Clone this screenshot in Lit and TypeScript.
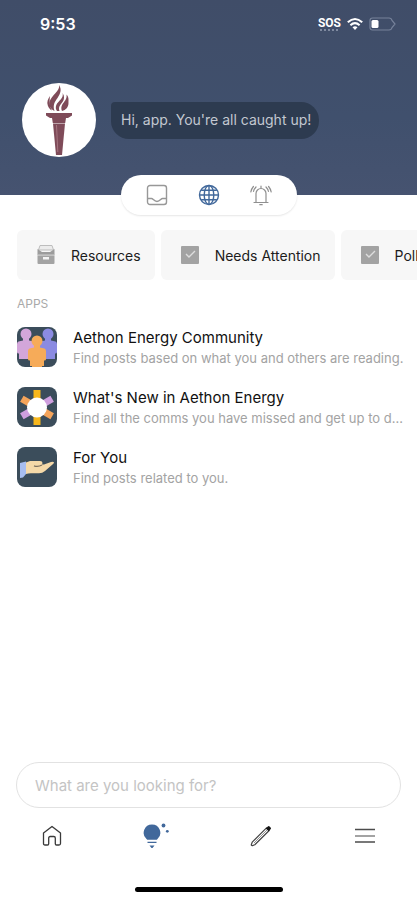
import { LitElement, html, css, svg, TemplateResult } from "lit";
import { customElement, state } from "lit/decorators.js";
import { classMap } from "lit/directives/class-map.js";

interface Shortcut {
  label: string;
  icon: TemplateResult;
}

interface AppEntry {
  title: string;
  text: string;
  icon: TemplateResult;
}

interface Action {
  id: string;
  label: string;
  icon: TemplateResult;
}

const drawerIcon = html`<svg width="18" height="20" viewBox="0 0 18 20" aria-hidden="true">
  <path d="M3 .5h12l1.500 4.500H1.500z" fill="#ececec" stroke="#bdbdbd" stroke-width="1" />
  <path d="M.5 4l4.500 3h8l4.500-3v6H.5z" fill="#9c9c9c" />
  <rect x=".5" y="10" width="17" height="9" rx="1" fill="#a3a3a3" />
  <rect x=".5" y="9.500" width="17" height="1.200" fill="#cfcfcf" />
  <path d="M6 12h6v2.500H6z" fill="#f4f4f4" />
</svg>`;

const checkIcon = html`<svg width="18" height="20" viewBox="0 0 18 20" aria-hidden="true">
  <rect x="0" y="1" width="18" height="18" rx="1" fill="#a3a3a3" />
  <path d="M5 9l3 3 6-6" fill="none" stroke="#dedede" stroke-width="1.400" />
</svg>`;

const person = (x: number, y: number, fill: string) => svg`
  <g transform="translate(${x} ${y})" fill=${fill}>
    <circle cx="9" cy="6" r="5.500" />
    <path d="M6 10h6v2.500l4.500 1q1.500.5 1.500 2.500v8q0 1.500-1.500 1.500H16V31H2v-5.500h-.5Q0 25.500 0 24v-8q0-2 1.500-2.500l4.500-1z" />
  </g>`;

const peopleIcon = html`<svg class="tile" viewBox="0 0 40 40" aria-hidden="true">
  <rect width="40" height="40" rx="8" fill="#3b4d5b" />
  ${person(0, 1, "#d3a6da")} ${person(22, 1, "#8b8be2")} ${person(11, 8, "#f6ab59")}
  <path d="M15 38h10v2H15z" fill="#f6ab59" />
</svg>`;

const sunIcon = html`<svg class="tile" viewBox="0 0 40 40" aria-hidden="true">
  <rect width="40" height="40" rx="8" fill="#3b4d5b" />
  <rect x="16.500" y="3" width="7" height="35" fill="#f7b71c" />
  <rect x="16.500" y="3" width="7" height="35" fill="#f5a45a" transform="rotate(-60 20 20.500)" />
  <rect x="16.500" y="3" width="7" height="35" fill="#cf9fdf" transform="rotate(60 20 20.500)" />
  <circle cx="20" cy="20.500" r="10" fill="#ffffff" />
</svg>`;

const handIcon = html`<svg class="tile" viewBox="0 0 40 40" aria-hidden="true">
  <rect width="40" height="40" rx="8" fill="#3b4d5b" />
  <path d="M3 16l6-1.500V27l-3 3.500-3 .5z" fill="#a7bdf0" />
  <path
    d="M9 15.500l4-1.500h10q2.500 0 2.500 2l-.5 1.500h2l7-2.500q2.500-.5 3 .3.300 1-1.500 2.200L28 24q-2.500 2.200-6 2.200h-8q-3 0-5 .8z"
    fill="#f5d9a8"
  />
  <path d="M17 18.800q4 1.500 8-.8" fill="none" stroke="#7d715f" stroke-width="1.300" />
</svg>`;

const torchIcon = html`<svg class="torch" viewBox="0 0 28 70" aria-hidden="true">
  <g fill="#7f4b59">
    <path d="M14 0c1.500 6-8 10.500-9.500 17-.8 4 1.500 7.500 5 9C7.500 20 10 16.500 12.500 13 15.500 8.500 17 4.500 14 0z" />
    <path d="M17.500 8c1.800 5-4.500 8-6.200 12-1 2.500-.4 4.500.7 6h2.500c-1.500-4 1-6.500 3-9 2-2.700 2.200-6 0-9z" />
    <path d="M21.500 9.500c.8 5-2.500 7-4.200 10-1.200 2.300-1.300 4.500-.3 6.500 4-1 6.500-4 6.500-8 0-3 .5-6-2-8.500z" />
    <path d="M5 11c-2 3-3.500 6-2.200 9.500.9 2.500 2.200 4 4.200 5C4 20.500 4.500 15 5 11z" />
    <path d="M1 28h26v2.500l-4 2.500H5l-4-2.500z" />
    <path d="M7 33h14l-.8 5H7.800z" />
    <path d="M8 38.500h12L17 70h-6z" />
  </g>
  <path d="M11.500 40l1.300 27" stroke="#a5747f" stroke-width="1" />
</svg>`;

const inboxIcon = html`<svg width="22" height="22" viewBox="0 0 22 22" aria-hidden="true">
  <g fill="none" stroke="#989898" stroke-width="1.400" stroke-linejoin="round">
    <rect x="1.500" y="1.500" width="19" height="19" rx="2.500" />
    <path d="M1.500 14.500h4c1.500 0 2.500 3 5.500 3s4-3 5.500-3h4" />
  </g>
</svg>`;

const globeIcon = html`<svg width="22" height="22" viewBox="0 0 22 22" aria-hidden="true">
  <g fill="none" stroke="#41689b" stroke-width="1.400">
    <circle cx="11" cy="11" r="9.500" />
    <ellipse cx="11" cy="11" rx="4.800" ry="9.500" />
    <path d="M11 1.500v19M1.500 11h19M3.200 6.200h15.600M3.200 15.800h15.600" />
  </g>
</svg>`;

const bellIcon = html`<svg width="22" height="22" viewBox="0 0 22 22" aria-hidden="true">
  <g fill="none" stroke="#8f8f8f" stroke-width="1.200" stroke-linecap="round" stroke-linejoin="round">
    <path d="M4 18.500h14M6 18V9.500a5 5 0 0 1 10 0V18M11 4.500V2M9.800 20.700h2.400" />
    <path d="M3.400 2.500Q1.300 5 .8 8M6 3Q4 5 3.500 7.500M18.600 2.500q2.100 2.500 2.600 5.500M16 3q2 2 2.500 4.500" />
  </g>
</svg>`;

const homeIcon = html`<svg width="20" height="22" viewBox="0 0 20 22" aria-hidden="true">
  <path
    d="M1.500 8L10 1.500 18.500 8v10.500q0 1.500-1.500 1.500h-2.500q-1.200 0-1.200-1.200V13q0-1.500-1.500-1.500H8.200q-1.500 0-1.500 1.500v5.800q0 1.200-1.200 1.200H3q-1.500 0-1.500-1.500z"
    fill="none"
    stroke="#3a3a3a"
    stroke-width="1.300"
    stroke-linejoin="round"
  />
</svg>`;

const bulbIcon = html`<svg width="26" height="26" viewBox="0 0 26 26" aria-hidden="true">
  <g fill="#41689b">
    <path d="M9 1.500a8.300 8.300 0 0 1 5.500 14.500l-.7.800H4.200L3.500 16A8.300 8.300 0 0 1 9 1.500z" />
    <path d="M4.500 18.700h9v1.400h-9zM6.500 22.500h5L9.500 25h-1z" />
    <circle cx="20.500" cy="2.500" r="1.900" />
    <circle cx="24.300" cy="8.300" r="1.400" />
  </g>
</svg>`;

const pencilIcon = html`<svg width="22" height="22" viewBox="0 0 22 22" aria-hidden="true">
  <path
    d="M2.200 17.200L16.500 2.800l2.700 2.700L4.800 19.800l-2.300.8q-1.500.2-1.100-1.100z"
    fill="none"
    stroke="#444"
    stroke-width="1.200"
    stroke-linejoin="round"
  />
  <path d="M4 18L17.800 4.200" stroke="#777" stroke-width=".8" />
  <path d="M15.800 3.400l2-2q.9-.9 1.800 0l1 1q.9.900 0 1.800l-2 2z" fill="#151515" />
</svg>`;

const menuIcon = html`<svg width="22" height="22" viewBox="0 0 22 22" aria-hidden="true">
  <path d="M1 4.500h20M1 17h20" stroke="#4c4c4c" stroke-width="1.500" />
  <path d="M1 11h20" stroke="#858585" stroke-width="1.500" />
</svg>`;

const shortcuts: Shortcut[] = [
  { label: "Resources", icon: drawerIcon },
  { label: "Needs Attention", icon: checkIcon },
  { label: "Polls", icon: checkIcon },
];

const apps: AppEntry[] = [
  {
    title: "Aethon Energy Community",
    text: "Find posts based on what you and others are reading.",
    icon: peopleIcon,
  },
  {
    title: "What's New in Aethon Energy",
    text: "Find all the comms you have missed and get up to date.",
    icon: sunIcon,
  },
  { title: "For You", text: "Find posts related to you.", icon: handIcon },
];

const views: Action[] = [
  { id: "inbox", label: "Inbox", icon: inboxIcon },
  { id: "explore", label: "Explore", icon: globeIcon },
  { id: "alerts", label: "Notifications", icon: bellIcon },
];

const tabs: Action[] = [
  { id: "home", label: "Home", icon: homeIcon },
  { id: "discover", label: "Discover", icon: bulbIcon },
  { id: "compose", label: "Compose", icon: pencilIcon },
  { id: "menu", label: "Menu", icon: menuIcon },
];

@customElement("status-bar")
class StatusBar extends LitElement {
  static styles = css`
    :host {
      display: flex;
      align-items: center;
      justify-content: space-between;
      padding: 12px 21px 0 40px;
      color: #fff;
    }
    .time {
      font-size: 16px;
      line-height: 24px;
      font-weight: 600;
    }
    .signals {
      display: flex;
      align-items: center;
      gap: 6px;
    }
    .sos {
      display: grid;
      justify-items: center;
      font: 700 12px/12px Roboto, sans-serif;
    }
    .dots {
      width: 18px;
      border-bottom: 2px dotted #7f8aa0;
    }
  `;

  render() {
    return html`
      <span class="time">9:53</span>
      <span class="signals">
        <span class="sos">SOS<span class="dots"></span></span>
        <svg width="16" height="14" viewBox="0 0 16 14" aria-label="Wi-Fi">
          <g fill="none" stroke="#fff" stroke-width="2.100">
            <path d="M.8 5.200Q8-1.200 15.200 5.200M3.400 8.200q4.600-4 9.200 0" />
          </g>
          <path d="M5.500 10.300q2.500-2 5 0L8 13z" fill="#fff" />
        </svg>
        <svg width="27" height="14" viewBox="0 0 27 14" aria-label="Battery">
          <path
            d="M3.500 1h16.500q2.500 0 3 2.500L26 7l-3 3.500Q22.500 13 20 13H3.500Q1 13 1 10.500v-7Q1 1 3.500 1z"
            fill="none"
            stroke="#76829a"
            stroke-width="1.200"
          />
          <rect x="2.500" y="3" width="7" height="8" rx="1.500" fill="#fff" />
        </svg>
      </span>
    `;
  }
}

@customElement("app-root")
class AppRoot extends LitElement {
  @state() private view = "explore";
  @state() private tab = "discover";

  static styles = css`
    :host {
      display: flex;
      flex-direction: column;
      min-height: 100vh;
      overflow-x: hidden;
      background: #fff;
      font-family: Inter, "Liberation Sans", sans-serif;
      color: #1c1c1c;
    }
    button {
      display: flex;
      align-items: center;
      justify-content: center;
      margin: 0;
      padding: 0;
      border: 0;
      background: none;
      color: inherit;
      font: inherit;
      cursor: pointer;
    }
    svg {
      display: block;
      flex: none;
    }
    .hero {
      padding-bottom: 38px;
      background: linear-gradient(#404d68, #40506d 60%, #465370);
    }
    .greeting {
      display: flex;
      align-items: center;
      gap: 15px;
      padding: 47px 22px 0;
    }
    .avatar {
      display: grid;
      place-items: center;
      width: 74px;
      height: 74px;
      border-radius: 50%;
      background: #fff;
    }
    .torch {
      width: 28px;
      height: 70px;
    }
    .bubble {
      margin: 0;
      padding: 8px 8px 9px 10px;
      border-radius: 4px 18px 18px 18px;
      background: #2d3b50;
      color: #c3c8d1;
      font-size: 14px;
      line-height: 20px;
    }
    .views {
      position: relative;
      display: flex;
      align-self: center;
      margin-top: -20px;
      padding: 0 10px;
      border-radius: 20px;
      background: #fff;
      box-shadow: 0 1px 2px rgba(0, 0, 0, 0.1);
    }
    .view {
      width: 52px;
      height: 40px;
    }
    .shortcuts {
      display: flex;
      gap: 6px;
      margin-top: 15px;
      padding: 0 17px;
      overflow: hidden;
    }
    .shortcut {
      flex: none;
      gap: 16px;
      height: 50px;
      padding: 0 14px 0 20px;
      border-radius: 6px;
      background: #f7f7f7;
      font-size: 14px;
    }
    .heading {
      margin: 16px 17px 0;
      color: #a9a9a9;
      font-size: 12px;
      line-height: 16px;
      font-weight: 400;
    }
    .apps {
      display: grid;
      gap: 20px;
      margin: 15px 0 24px;
      padding: 0 12px 0 17px;
      list-style: none;
    }
    .app {
      display: grid;
      grid-template-columns: 40px minmax(0, 1fr);
      gap: 16px;
      color: inherit;
      text-decoration: none;
    }
    .tile {
      width: 40px;
      height: 40px;
    }
    .title {
      display: block;
      font-size: 15px;
      line-height: 22px;
      color: #111;
    }
    .text {
      display: block;
      overflow: hidden;
      color: #a3a3a3;
      font-size: 13px;
      line-height: 18px;
      text-overflow: ellipsis;
      white-space: nowrap;
    }
    .footer {
      margin-top: auto;
    }
    .search {
      display: flex;
      margin: 0 16px;
    }
    .query {
      box-sizing: border-box;
      width: 100%;
      height: 46px;
      padding: 0 18px;
      border: 1px solid #e2e2e2;
      border-radius: 23px;
      outline: 0;
      background: #fff;
      color: #333;
      font: inherit;
      font-size: 15px;
    }
    .query::placeholder {
      color: #c4c4c4;
      opacity: 1;
    }
    .tabs {
      display: grid;
      grid-template-columns: repeat(4, 1fr);
    }
    .tab {
      height: 56px;
    }
    .indicator {
      width: 148px;
      height: 5px;
      margin: 23px auto 8px;
      border-radius: 3px;
      background: #000;
    }
  `;

  render() {
    return html`
      <header class="hero">
        <status-bar></status-bar>
        <div class="greeting">
          <span class="avatar">${torchIcon}</span>
          <p class="bubble">Hi, app. You're all caught up!</p>
        </div>
      </header>
      <nav class="views" aria-label="Views">
        ${views.map(
          (v) => html`<button
            class=${classMap({ view: true, current: this.view === v.id })}
            aria-label=${v.label}
            @click=${() => (this.view = v.id)}
          >
            ${v.icon}
          </button>`
        )}
      </nav>
      <div class="shortcuts">
        ${shortcuts.map((s) => html`<button class="shortcut">${s.icon}<span>${s.label}</span></button>`)}
      </div>
      <h2 class="heading">APPS</h2>
      <ul class="apps">
        ${apps.map(
          (a) => html`<li>
            <a class="app" href="#">
              ${a.icon}
              <span>
                <span class="title">${a.title}</span>
                <span class="text">${a.text}</span>
              </span>
            </a>
          </li>`
        )}
      </ul>
      <footer class="footer">
        <form class="search" role="search" @submit=${(e: Event) => e.preventDefault()}>
          <input class="query" type="text" aria-label="Search" placeholder="What are you looking for?" />
        </form>
        <nav class="tabs" aria-label="Main">
          ${tabs.map(
            (t) => html`<button
              class=${classMap({ tab: true, current: this.tab === t.id })}
              aria-label=${t.label}
              @click=${() => (this.tab = t.id)}
            >
              ${t.icon}
            </button>`
          )}
        </nav>
        <div class="indicator"></div>
      </footer>
    `;
  }
}
